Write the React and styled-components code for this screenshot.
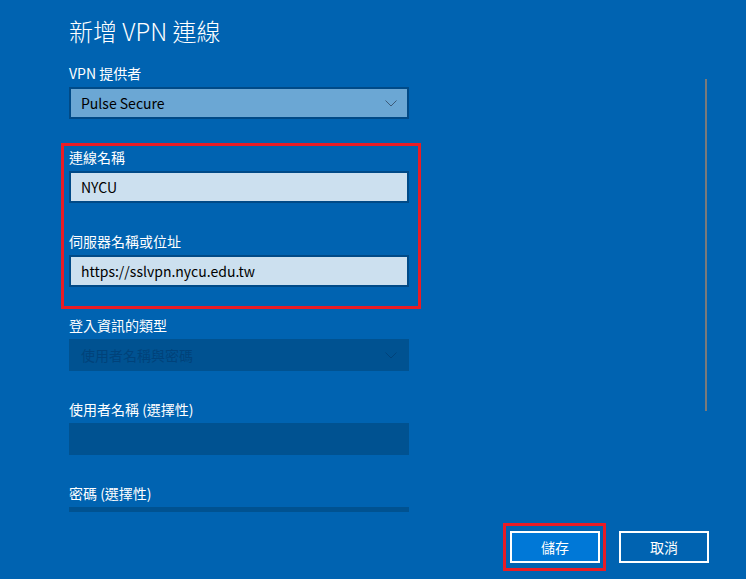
import React from 'react';
import styled, { createGlobalStyle } from 'styled-components';

const GlobalStyle = createGlobalStyle`
  html, body {
    margin: 0;
    padding: 0;
    background: #0063b1;
  }
  body {
    font-family: "Noto Sans CJK TC", "Noto Sans", sans-serif;
    color: #fff;
  }
`;

const Page = styled.div`
  width: 746px;
  height: 579px;
  display: flex;
  flex-direction: column;
  background: #0063b1;
  overflow: hidden;
`;

const ScrollArea = styled.div`
  position: relative;
  height: 512px;
  overflow: hidden;
  padding: 15px 0 0 69px;
  box-sizing: border-box;
`;

const ScrollThumb = styled.div`
  position: absolute;
  left: 705px;
  top: 79px;
  width: 2px;
  height: 332px;
  background: #7a7a7a;
`;

const Title = styled.h1`
  margin: 0 0 16px;
  font-size: 24px;
  font-weight: 300;
  line-height: 32px;
  color: #fff;
`;

const Form = styled.div`
  width: 340px;
  display: flex;
  flex-direction: column;
  gap: 28px;
`;

const Field = styled.div`
  display: flex;
  flex-direction: column;
`;

const Label = styled.label`
  font-size: 14px;
  line-height: 20px;
  margin-bottom: 4px;
  color: #fff;
`;

const Box = styled.div`
  height: 32px;
  box-sizing: border-box;
  display: flex;
  align-items: center;
  justify-content: space-between;
  padding: 0 10px 0 10px;
  font-size: 14px;
  border: 2px solid ${p => (p.$disabled ? 'transparent' : '#004a87')};
  background: ${p => (p.$disabled ? '#005291' : p.$select ? '#6ba7d4' : '#cce0ef')};
  color: ${p => (p.$disabled ? '#00427a' : '#000')};
`;

const Annotated = styled.div`
  position: relative;
  display: flex;
  flex-direction: column;
  gap: 28px;

  &::after {
    content: '';
    position: absolute;
    left: -8px;
    top: -4px;
    right: -12px;
    bottom: -22px;
    border: 3px solid #ea1c24;
    pointer-events: none;
  }
`;

const Footer = styled.div`
  flex: 1;
  display: flex;
  justify-content: flex-end;
  align-items: flex-start;
  gap: 19px;
  padding: 19px 37px 0 0;
`;

const ButtonWrap = styled.div`
  position: relative;

  &::after {
    content: '';
    display: ${p => (p.$marked ? 'block' : 'none')};
    position: absolute;
    left: -7px;
    top: -8px;
    right: -6px;
    bottom: -8px;
    border: 3px solid #ea1c24;
    pointer-events: none;
  }
`;

const Button = styled.button`
  width: 90px;
  height: 32px;
  box-sizing: border-box;
  border: 2px solid #fff;
  background: ${p => (p.$primary ? '#0078d7' : 'transparent')};
  color: #fff;
  font-family: "Noto Sans CJK TC", "Noto Sans", sans-serif;
  font-size: 14px;
  padding: 0;
`;

function Chevron({ color }) {
  return (
    <svg width="12" height="7" viewBox="0 0 12 7">
      <path d="M0.5 0.5 L6 6 L11.5 0.5" fill="none" stroke={color} strokeWidth="1" />
    </svg>
  );
}

export default function App() {
  return (
    <Page>
      <GlobalStyle />
      <ScrollArea>
        <Title>新增 VPN 連線</Title>
        <Form>
          <Field>
            <Label>VPN 提供者</Label>
            <Box $select>
              <span>Pulse Secure</span>
              <Chevron color="#3c5a78" />
            </Box>
          </Field>
          <Annotated>
            <Field>
              <Label>連線名稱</Label>
              <Box>NYCU</Box>
            </Field>
            <Field>
              <Label>伺服器名稱或位址</Label>
              <Box>https://sslvpn.nycu.edu.tw</Box>
            </Field>
          </Annotated>
          <Field>
            <Label>登入資訊的類型</Label>
            <Box $disabled>
              <span>使用者名稱與密碼</span>
              <Chevron color="#00427a" />
            </Box>
          </Field>
          <Field>
            <Label>使用者名稱 (選擇性)</Label>
            <Box $disabled />
          </Field>
          <Field>
            <Label>密碼 (選擇性)</Label>
            <Box $disabled />
          </Field>
        </Form>
        <ScrollThumb />
      </ScrollArea>
      <Footer>
        <ButtonWrap $marked>
          <Button $primary>儲存</Button>
        </ButtonWrap>
        <ButtonWrap>
          <Button>取消</Button>
        </ButtonWrap>
      </Footer>
    </Page>
  );
}
